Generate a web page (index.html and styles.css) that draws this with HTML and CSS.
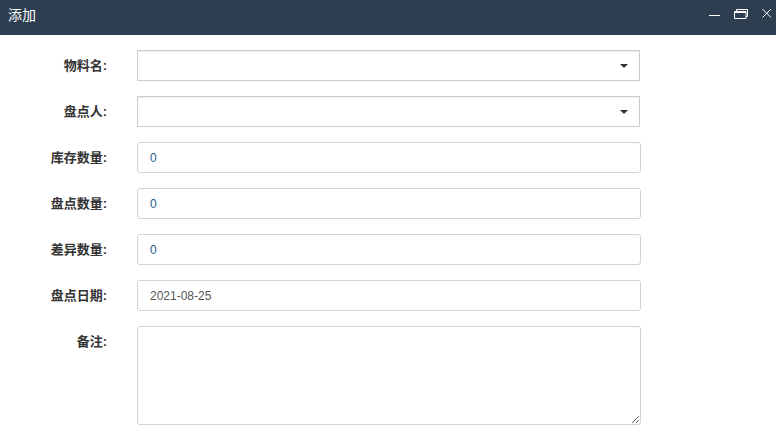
FILE: index.html
```html
<!DOCTYPE html>
<html lang="zh-CN">

<head>
    <meta charset="UTF-8">
    <meta name="viewport" content="width=device-width, initial-scale=1.0">
    <title>添加</title>
    <link rel="stylesheet" href="styles.css">
</head>

<body>
    <div class="titlebar">
        <span class="title">添加</span>
        <div class="win-btns">
            <svg width="12" height="12" viewBox="0 0 12 12"><path d="M1 8.5H12" stroke="#fff" fill="none"/></svg>
            <svg width="14" height="12" viewBox="0 0 14 12"><path d="M0.5 4.5H12V11.5H0.5ZM0.5 5.5H12M2.5 4.5V2.5H13.5V9.5H12" stroke="#fff" fill="none"/></svg>
            <svg width="10" height="12" viewBox="0 0 10 12"><path d="M0.5 2L9 10.5M9 2L0.5 10.5" stroke="#fff" fill="none"/></svg>
        </div>
    </div>

    <form class="form">
        <div class="row">
            <label class="lbl">物料名:</label>
            <div class="select"><span class="caret"></span></div>
        </div>
        <div class="row">
            <label class="lbl">盘点人:</label>
            <div class="select"><span class="caret"></span></div>
        </div>
        <div class="row">
            <label class="lbl">库存数量:</label>
            <input class="field num" type="text" value="0">
        </div>
        <div class="row">
            <label class="lbl">盘点数量:</label>
            <input class="field num" type="text" value="0">
        </div>
        <div class="row">
            <label class="lbl">差异数量:</label>
            <input class="field num" type="text" value="0">
        </div>
        <div class="row">
            <label class="lbl">盘点日期:</label>
            <input class="field" type="text" value="2021-08-25">
        </div>
        <div class="row">
            <label class="lbl">备注:</label>
            <textarea class="field area"></textarea>
        </div>
    </form>
</body>

</html>
```

FILE: styles.css
```css
*{
    margin: 0;
    padding: 0;
    box-sizing: border-box;
}
body{
    background-color: #fff;
    font-family: "Liberation Sans", "Noto Sans CJK SC", sans-serif;
    font-size: 12px;
    overflow: hidden;
}
.titlebar{
    height: 35px;
    background-color: #2d3e50;
    color: #fff;
    display: flex;
    align-items: center;
    justify-content: space-between;
    padding: 0 4px 0 8px;
}
.title{
    font-size: 14px;
    padding-bottom: 7px;
}
.win-btns{
    display: flex;
    align-items: center;
    gap: 14px;
    padding-bottom: 9px;
}
.form{
    display: flex;
    flex-direction: column;
    gap: 15px;
    padding-top: 15px;
}
.row{
    display: flex;
    gap: 30px;
}
.lbl{
    width: 107px;
    flex: none;
    text-align: right;
    font-size: 13px;
    font-weight: bold;
    color: #333;
    padding-top: 7px;
    line-height: 18px;
}
.select{
    width: 503px;
    height: 31px;
    border: 1px solid #ccc;
    box-shadow: inset 0 1px 1px rgba(0,0,0,.075);
    display: flex;
    align-items: center;
    justify-content: flex-end;
    padding-right: 11px;
}
.caret{
    width: 0;
    height: 0;
    border-left: 4px solid transparent;
    border-right: 4px solid transparent;
    border-top: 4px solid #333;
}
.field{
    width: 504px;
    height: 31px;
    border: 1px solid #d2d2de;
    border-radius: 3px;
    padding: 0 12px;
    font-family: inherit;
    font-size: 12px;
    color: #555;
    outline: none;
}
.num{
    color: #2b5a7e;
}
.area{
    height: 99px;
    padding: 6px 12px;
    display: block;
}
```
